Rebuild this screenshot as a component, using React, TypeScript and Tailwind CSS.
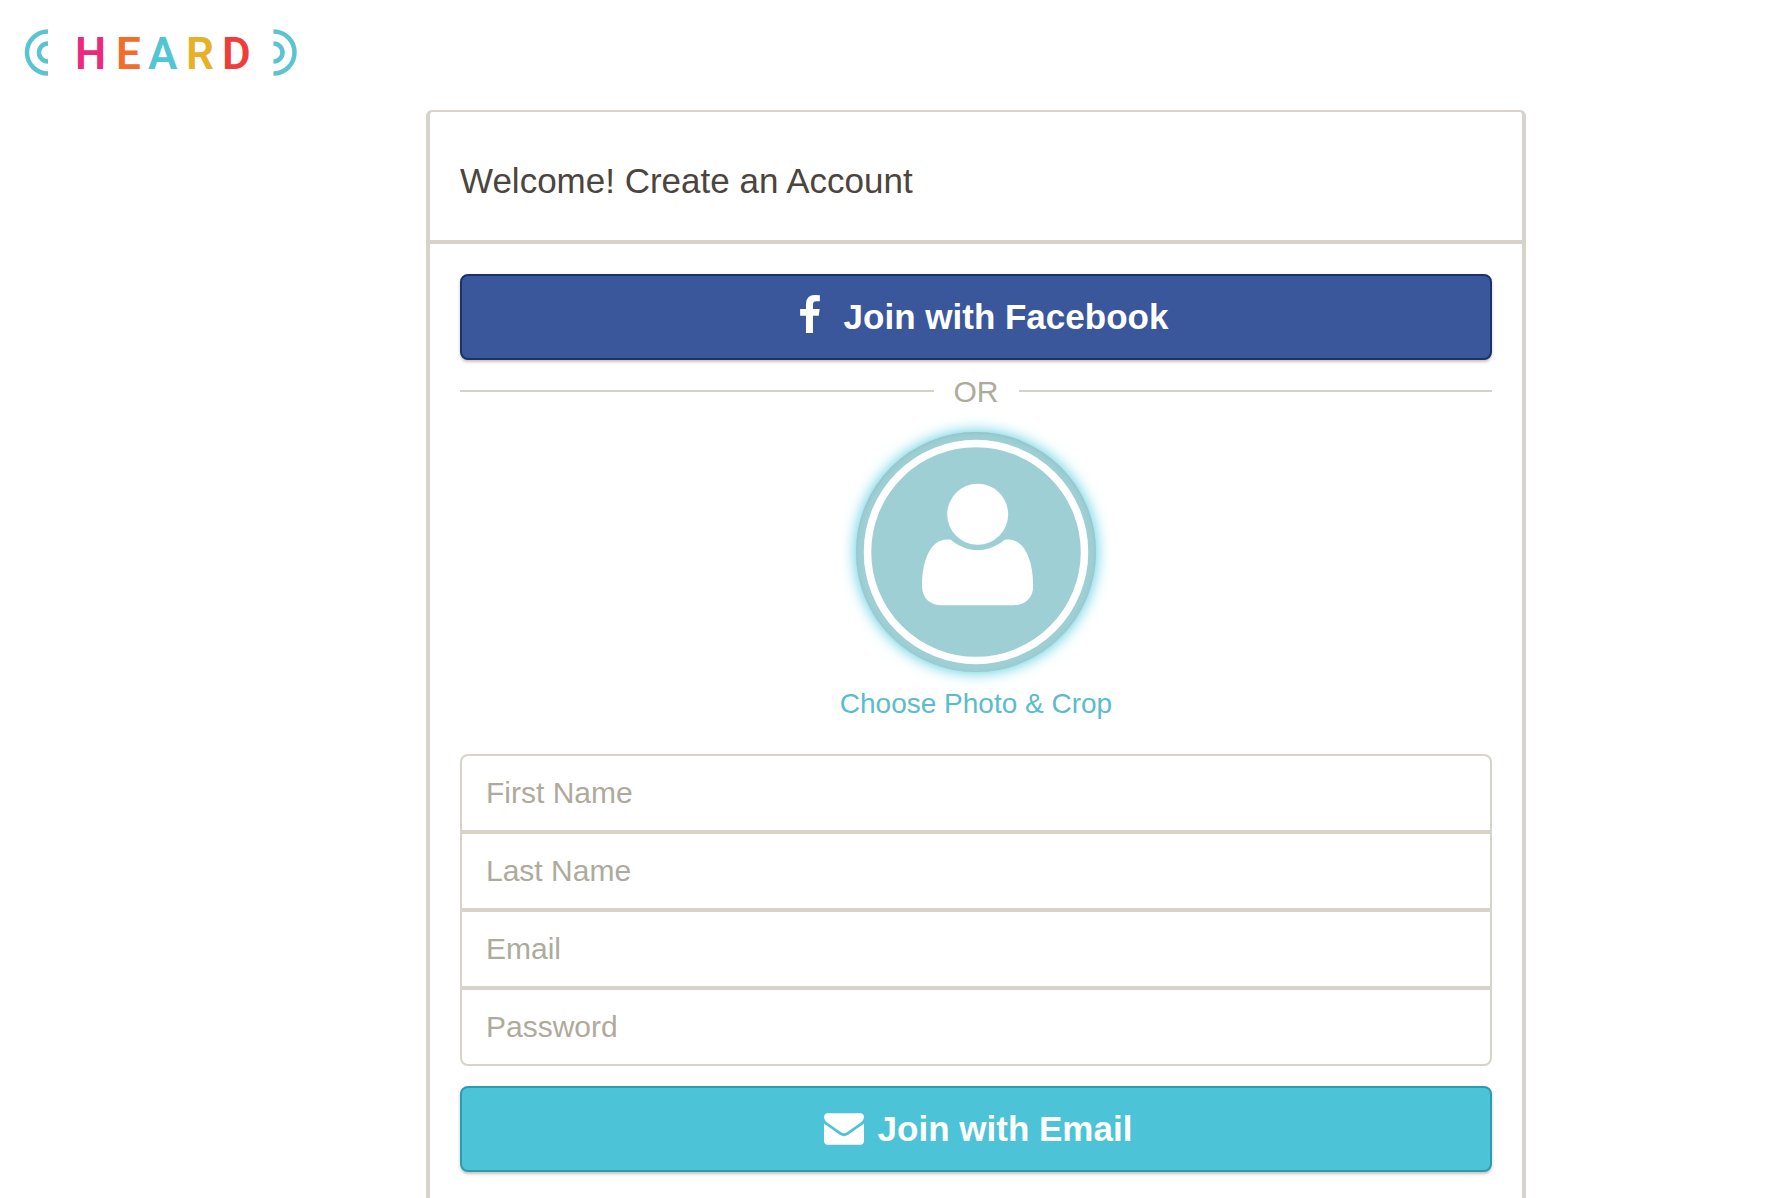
import type { ReactNode } from "react";

const FIELDS = [
  { name: "firstName", label: "First Name", type: "text" },
  { name: "lastName", label: "Last Name", type: "text" },
  { name: "email", label: "Email", type: "email" },
  { name: "password", label: "Password", type: "password" },
];

const LETTERS = [
  { char: "H", x: 51, fill: "#ec2a7b" },
  { char: "E", x: 92, fill: "#f26c2a" },
  { char: "A", x: 124, fill: "#52c5d3" },
  { char: "R", x: 162, fill: "#e6b126" },
  { char: "D", x: 198, fill: "#ef3e3a" },
];

function Logo() {
  return (
    <svg className="h-[60px] w-[274px]" viewBox="0 -4 274 60" role="img" aria-label="Heard">
      <g fill="none" stroke="#5bc3d1" strokeWidth="4.5">
        <path d="M24 5.5a21 21 0 0 0 0 42" />
        <path d="M24 17.5a9 9 0 0 0 0 18" />
        <path d="M249.5 5.5a21 21 0 0 1 0 42" />
        <path d="M249.5 17.5a9 9 0 0 1 0 18" />
      </g>
      <g fontFamily="Roboto, sans-serif" fontSize="44" fontWeight="600">
        {LETTERS.map((letter) => (
          <text key={letter.char} x={letter.x} y="42.500" fill={letter.fill}>
            {letter.char}
          </text>
        ))}
      </g>
    </svg>
  );
}

function FacebookIcon() {
  return (
    <svg className="mb-1.5 h-[38px] w-5" viewBox="479 0 864 1664" fill="currentColor" aria-hidden="true">
      <path d="M1343 12v264h-157q-86 0-116 36t-30 108v189h293l-39 296h-254v759h-306v-759h-255v-296h255v-218q0-186 104-288.5t277-102.5q147 0 228 12z" />
    </svg>
  );
}

function EnvelopeIcon() {
  return (
    <svg className="h-8 w-10" viewBox="0 256 1792 1408" fill="currentColor" aria-hidden="true">
      <path d="M1792 710v794q0 66-47 113t-113 47h-1472q-66 0-113-47t-47-113v-794q44 49 101 87 362 246 497 345 57 42 92.5 65.5t94.5 48 110 24.5h2q51 0 110-24.5t94.5-48 92.5-65.5q170-123 498-345 57-39 100-87zm0-294q0 79-49 151t-122 123q-376 261-468 325-10 7-42.5 31t-54 38.5-52 32.5-57.5 27-50 9h-2q-23 0-50-9t-57.5-27-52-32.5-54-38.5-42.5-31q-91-64-262-182.5t-205-142.5q-62-42-117-115.5t-55-136.5q0-78 41.5-130t118.5-52h1472q65 0 112.5 47t47.5 113z" />
    </svg>
  );
}

function Avatar() {
  return (
    <span className="block size-60 rounded-full bg-[#9dcfd4] shadow-[0_0_15px_#4cc9dc,inset_0_1px_4px_#8fc0c5]">
      <svg viewBox="0 0 240 240" aria-hidden="true">
        <circle cx="120" cy="120" r="108.5" fill="#9dcfd4" stroke="#fff" strokeWidth="7.5" />
        <circle cx="121.7" cy="82.3" r="30.5" fill="#fff" />
        <path
          d="M94.7 107.7C111 121.5 132 121.5 148.7 107.7C167 104.5 177.2 126 177.2 154C177.2 166 169 173.3 157 173.3H86C74 173.3 66 166 66 154C66 126 76 104.5 94.7 107.7Z"
          fill="#fff"
        />
      </svg>
    </span>
  );
}

function SubmitButton({ className, children }: { className: string; children: ReactNode }) {
  return (
    <button
      type="submit"
      className={`flex h-[86px] w-full items-center justify-center rounded-lg border-2 text-[35px] font-bold text-white shadow-[0_2px_3px_rgba(80,50,20,0.3)] ${className}`}
    >
      {children}
    </button>
  );
}

export default function App() {
  return (
    <div className="flex min-h-screen flex-col bg-white font-['Liberation_Sans',Arial,sans-serif]">
      <header className="flex h-[110px] shrink-0 items-start px-6 pt-[22px]">
        <a href="#">
          <Logo />
        </a>
      </header>

      <main className="flex grow flex-col pl-[162px]">
        <section className="mx-auto w-full max-w-[1100px] grow rounded-t-md border-x-4 border-t-2 border-[#d7d3c8]">
          <div className="flex h-[132px] items-center border-b-4 border-[#d7d3c8] px-[30px] pt-2.5">
            <h1 className="text-[35px] leading-10 text-[#4b453e]">Welcome! Create an Account</h1>
          </div>

          <form className="px-[30px] pt-[30px] pb-5" onSubmit={(e) => e.preventDefault()}>
            <SubmitButton className="gap-6 border-[#1b3168] bg-[#3b579b] pl-4">
              <FacebookIcon />
              Join with Facebook
            </SubmitButton>

            <div className="mt-[11px] flex h-10 items-center gap-5 text-[30px] text-[#aeaa9c]">
              <span className="h-0.5 grow bg-[#d5d3c6]" />
              OR
              <span className="h-0.5 grow bg-[#d5d3c6]" />
            </div>

            <div className="mt-[21px] flex flex-col items-center">
              <button type="button" className="flex flex-col items-center gap-3 text-[28px] leading-10 text-[#5bbccd]">
                <Avatar />
                Choose Photo &amp; Crop
              </button>
            </div>

            <div className="mt-[30px] flex flex-col">
              {FIELDS.map((field) => (
                <input
                  key={field.name}
                  type={field.type}
                  name={field.name}
                  placeholder={field.label}
                  aria-label={field.label}
                  className="h-[78px] w-full border-2 border-[#d7d3c8] px-6 text-[30px] text-[#4b453e] placeholder:text-[#aeaa9c] first:rounded-t-lg last:rounded-b-lg"
                />
              ))}
            </div>

            <div className="mt-5">
              <SubmitButton className="gap-3.5 border-[#2a9db0] bg-[#4cc3d6] pl-1">
                <EnvelopeIcon />
                Join with Email
              </SubmitButton>
            </div>
          </form>
        </section>
      </main>
    </div>
  );
}
